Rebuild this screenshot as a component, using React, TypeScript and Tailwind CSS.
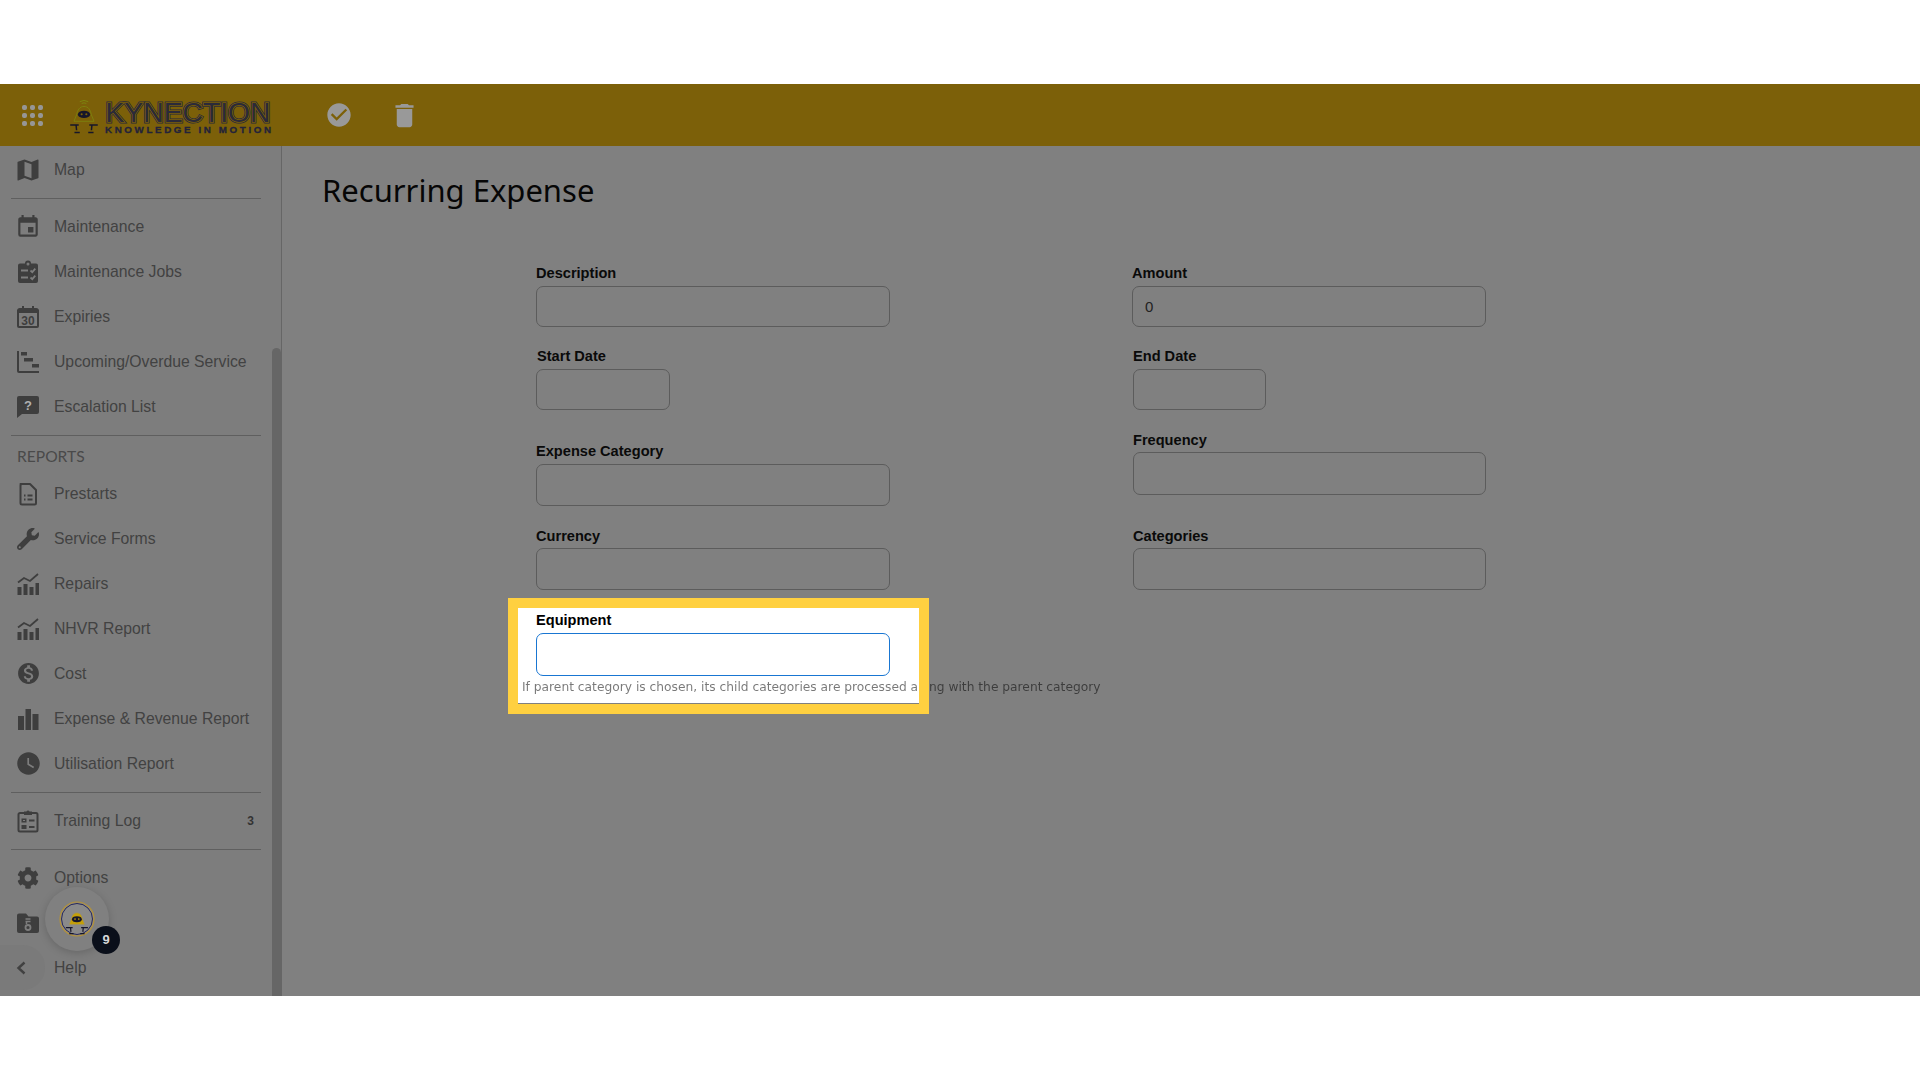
import * as React from 'react';
import { FaCog, FaWrench } from 'react-icons/fa';
import { MdCheckCircle, MdDelete, MdEvent, MdMap, MdMonetizationOn, MdWatchLater } from 'react-icons/md';

type IconType = React.ComponentType<{ size?: number; className?: string }>;

const PAPER = '#7d7d7d';

function JobsIcon({ size = 24 }: { size?: number }) {
  return (
    <svg width={size} height={size} viewBox="0 0 24 24">
      <path
        fill="currentColor"
        d="M4 3.5h5a3 3 0 0 1 6 0h5a2 2 0 0 1 2 2V21a2 2 0 0 1-2 2H4a2 2 0 0 1-2-2V5.500a2 2 0 0 1 2-2z"
      />
      <g stroke={PAPER} strokeWidth="1.8" fill="none">
        <path d="M5 10.500h7M5 17.500h7M14.500 10.500l1.800 1.700 3-3.500M14.500 17.500l1.800 1.700 3-3.500" />
        <circle cx="12" cy="4" r="0.6" />
      </g>
    </svg>
  );
}

function ExpiriesIcon({ size = 24 }: { size?: number }) {
  return (
    <svg width={size} height={size} viewBox="0 0 24 24">
      <path
        fill="currentColor"
        fillRule="evenodd"
        d="M6 1h2v2h8V1h2v2h2a3 3 0 0 1 3 2v16a2 2 0 0 1-2 2H3a2 2 0 0 1-2-2V5a3 3 0 0 1 3-2h2zM3 8v13h18V8z"
      />
      <text x="12" y="20" textAnchor="middle" fontSize="12" fontWeight="700" fontFamily="Liberation Sans" fill="currentColor">
        30
      </text>
    </svg>
  );
}

function GanttIcon({ size = 24 }: { size?: number }) {
  return (
    <svg width={size} height={size} viewBox="0 0 24 24" fill="currentColor">
      <path d="M1 1h2v19.500a.5.5 0 0 0 .5.5H23v2H3a2 2 0 0 1-2-2z" />
      <path d="M5 2h6v3.500H5zM8 8h9v3.500H8zM16 14h7v3.500h-7z" />
    </svg>
  );
}

function EscalationIcon({ size = 24 }: { size?: number }) {
  return (
    <svg width={size} height={size} viewBox="0 0 24 24">
      <path fill="currentColor" d="M3 1h18a2 2 0 0 1 2 2v14a2 2 0 0 1-2 2H6l-5 4V3a2 2 0 0 1 2-2z" />
      <text x="12" y="14.500" textAnchor="middle" fontSize="13" fontWeight="700" fontFamily="Liberation Sans" fill="#b0b0b0">
        ?
      </text>
    </svg>
  );
}

function DocIcon({ size = 24 }: { size?: number }) {
  return (
    <svg width={size} height={size} viewBox="0 0 24 24" fill="none" stroke="currentColor" strokeWidth="2">
      <path d="M4.500 2h9.500l6 6v13a1.500 1.500 0 0 1-1.500 1.500H6A1.500 1.500 0 0 1 4.500 21V3.500A1.500 1.500 0 0 1 6 2z" strokeLinejoin="round" />
      <path d="M8 13.500h1.500M11.500 13.500h5M8 17.500h1.500M11.500 17.500h5" />
    </svg>
  );
}

function BarsLineIcon({ size = 24 }: { size?: number }) {
  return (
    <svg width={size} height={size} viewBox="0 0 24 24">
      <path fill="currentColor" d="M1.500 15h4v8h-4zM7.500 12h4v11h-4zM13.500 15h4v8h-4zM19.500 11h3.500v12h-3.500z" />
      <path fill="none" stroke="currentColor" strokeWidth="1.800" d="M2 10.500l6-4.500 6 3 8-7" />
    </svg>
  );
}

function BarsIcon({ size = 24 }: { size?: number }) {
  return (
    <svg width={size} height={size} viewBox="0 0 24 24" fill="currentColor">
      <path d="M2 9h6v14H2zM9.500 2h5.500v21H9.500zM16.500 7h6v16h-6z" />
    </svg>
  );
}

function TrainingIcon({ size = 24 }: { size?: number }) {
  return (
    <svg width={size} height={size} viewBox="0 0 24 24">
      <path
        fill="none"
        stroke="currentColor"
        strokeWidth="2"
        d="M8 4H4a1.500 1.500 0 0 0-1.500 1.500V21A1.500 1.500 0 0 0 4 22.500h16a1.500 1.500 0 0 0 1.500-1.500V5.500A1.500 1.500 0 0 0 20 4h-4"
      />
      <path
        fill="currentColor"
        fillRule="evenodd"
        d="M8 2.500h2.500a1.600 1.600 0 0 1 3 0H16v3.500H8zM5.500 9.500h5v4h-5zM7 11v1h2v-1zM13 10.500h5.500v2H13zM5.500 16h5v4h-5zM13 17h5.500v2H13z"
      />
    </svg>
  );
}

function FolderIcon({ size = 24 }: { size?: number }) {
  return (
    <svg width={size} height={size} viewBox="0 0 24 24">
      <path fill="currentColor" d="M3 2.500h7l2.500 3H21a2 2 0 0 1 2 2V20a2 2 0 0 1-2 2H3a2 2 0 0 1-2-2V4.500a2 2 0 0 1 2-2z" />
      <path fill="none" stroke={PAPER} strokeWidth="1.500" d="M9.500 8h5M9.500 10.500h5M10.500 10.500V13" />
      <circle cx="12" cy="16.500" r="2.500" fill="none" stroke={PAPER} strokeWidth="1.800" />
    </svg>
  );
}

function AppsIcon() {
  return (
    <div className="grid w-[21px] grid-cols-3 gap-[3px]">
      {Array.from({ length: 9 }, (_, i) => (
        <span key={i} className="h-[5px] w-[5px] rounded-[2px] bg-[#969696]" />
      ))}
    </div>
  );
}

/** Little robot with the wifi arcs; used in the header and (smaller) in the round button. */
function Mascot({ body, outline }: { body: string; outline: string }) {
  return (
    <g>
      <path d="M10 3.500q4-2.500 8 0M11.800 5.200q2.200-1.300 4.400 0" stroke={outline} strokeWidth="0.800" fill="none" />
      <path d="M14 8c4 0 6 3 7 8l2.500 6h-19l2.500-6c1-5 3-8 7-8z" fill={body} stroke={outline} strokeWidth="0.700" />
      <ellipse cx="14" cy="15.500" rx="5.800" ry="3.500" fill="#16162a" />
      <circle cx="11.800" cy="15.300" r="1" fill={body} />
      <circle cx="16.200" cy="15.300" r="1" fill={body} />
      <path
        d="M1 25.500h5.500M9 25.500h-2.500l.5 5M5 32.500h5M27 25.500h-5.500M19 25.500h2.500l-.5 5M23 32.500h-5"
        stroke="#16162a"
        strokeWidth="1.400"
        fill="none"
      />
    </g>
  );
}

function Logo() {
  return (
    <div className="ml-[26px] flex items-center">
      <svg width="30" height="36" viewBox="0 0 28 34" className="mt-[2px]">
        <Mascot body="#7c6008" outline="#7d8a10" />
      </svg>
      <svg width="170" height="38" viewBox="0 0 170 38" className="ml-[4px] mt-[4px]">
        <defs>
          <text
            id="kynection-word"
            x="2.500"
            y="24"
            fontFamily="Liberation Sans"
            fontSize="27"
            textLength="165"
            lengthAdjust="spacingAndGlyphs"
          >
            KYNECTION
          </text>
        </defs>
        {/* layered strokes give the three-line lettering of the logo */}
        <use href="#kynection-word" fill="#2b2a38" stroke="#2b2a38" strokeWidth="3" />
        <use href="#kynection-word" fill="#7c6008" stroke="#7c6008" strokeWidth="1.500" />
        <use href="#kynection-word" fill="#2b2a38" />
        <text
          x="2"
          y="35"
          fontFamily="Liberation Sans"
          fontWeight="700"
          fontSize="9.800"
          textLength="166"
          fill="#23233a"
          stroke="#23233a"
          strokeWidth="0.300"
        >
          KNOWLEDGE IN MOTION
        </text>
      </svg>
    </div>
  );
}

function Header() {
  return (
    <header className="flex h-[62px] shrink-0 items-center bg-[#7c6009]">
      <div className="ml-[22px]">
        <AppsIcon />
      </div>
      <Logo />
      <div className="ml-[52px] text-[#999999]">
        <MdCheckCircle size={28} />
      </div>
      <div className="ml-[36px] text-[#999999]">
        <MdDelete size={31} />
      </div>
    </header>
  );
}

function NavRow({ icon: Icon, size, label, count }: { icon?: IconType; size?: number; label?: string; count?: string }) {
  return (
    <div className="flex h-[45px] items-center text-[15.75px] text-[#424242]">
      <span className="ml-[16px] flex w-[24px] shrink-0 items-center justify-center text-[#3e3e3e]">
        {Icon && <Icon size={size ?? 24} className="shrink-0" />}
      </span>
      <span className="ml-[14px] flex-1">{label}</span>
      {count && <span className="mr-[18px] text-[12px] font-bold text-[#333333]">{count}</span>}
    </div>
  );
}

function Divider() {
  return <div className="mx-[11px] mb-[5px] mt-[6px] h-px bg-[#5f5f5f]" />;
}

function Sidebar() {
  return (
    <aside className="relative flex w-[282px] shrink-0 border-r border-[#666666] bg-[#7d7d7d]">
      <nav className="w-[272px] overflow-hidden pt-px font-['Liberation_Sans',sans-serif]">
        <NavRow icon={MdMap} size={28} label="Map" />
        <Divider />
        <NavRow icon={MdEvent} size={26} label="Maintenance" />
        <NavRow icon={JobsIcon} label="Maintenance Jobs" />
        <NavRow icon={ExpiriesIcon} label="Expiries" />
        <NavRow icon={GanttIcon} label="Upcoming/Overdue Service" />
        <NavRow icon={EscalationIcon} label="Escalation List" />
        <Divider />
        <div className="flex h-[30px] items-center pl-[17px] pt-[2px] font-['Lato',sans-serif] text-[15.6px] text-[#4a4a4a]">
          REPORTS
        </div>
        <NavRow icon={DocIcon} label="Prestarts" />
        <NavRow icon={FaWrench} size={22} label="Service Forms" />
        <NavRow icon={BarsLineIcon} label="Repairs" />
        <NavRow icon={BarsLineIcon} label="NHVR Report" />
        <NavRow icon={MdMonetizationOn} size={25} label="Cost" />
        <NavRow icon={BarsIcon} label="Expense & Revenue Report" />
        <NavRow icon={MdWatchLater} size={27} label="Utilisation Report" />
        <Divider />
        <NavRow icon={TrainingIcon} label="Training Log" count="3" />
        <Divider />
        <NavRow icon={FaCog} size={22} label="Options" />
        <NavRow icon={FolderIcon} />
        <NavRow label="Help" />
      </nav>
      <div className="flex flex-1 flex-col justify-end">
        <div className="h-[648px] rounded-t-[6px] bg-[#666666]" />
      </div>

      {/* collapse tab and chat button float over the nav */}
      <div className="absolute bottom-[6px] left-0 flex h-[45px] w-[45px] items-center rounded-r-[22px] bg-[#7a7a7a] pl-[16px] text-[#414141]">
        <svg width="10" height="14" viewBox="0 0 10 14" fill="none" stroke="currentColor" strokeWidth="2.400">
          <path d="M8.500 1.500L2.500 7l6 5.500" />
        </svg>
      </div>
      <div className="absolute left-[45px] top-[741px] flex h-[64px] w-[64px] items-center justify-center rounded-full bg-[#808080] shadow-[0_2px_8px_rgba(0,0,0,0.18)]">
        <svg width="36" height="36" viewBox="0 0 36 36">
          <circle cx="18" cy="18" r="17" fill="#8a8a8a" stroke="#b3923a" strokeWidth="1.200" />
          <circle cx="18" cy="18" r="15.500" fill="none" stroke="#27285a" strokeWidth="1" />
          <g transform="translate(6 5) scale(0.85)">
            <Mascot body="#c49f08" outline="#8a8a8a" />
          </g>
        </svg>
        <span className="absolute left-[47px] top-[39px] flex h-[28px] w-[28px] items-center justify-center rounded-full bg-[#0a0f1a] font-['Liberation_Sans',sans-serif] text-[13px] font-bold text-[#d8d8d8]">
          9
        </span>
      </div>
    </aside>
  );
}

function Field({
  label,
  value,
  width = 'w-full',
  height,
  labelClass = '',
  className = '',
}: {
  label: string;
  value?: string;
  width?: string;
  height: string;
  labelClass?: string;
  className?: string;
}) {
  return (
    <div className={className}>
      <div className={`mb-[4px] h-[18px] text-[14.6px] font-bold leading-[18px] text-[#0a0a0a] ${labelClass}`}>{label}</div>
      <input
        readOnly
        value={value ?? ''}
        className={`block rounded-[7px] border border-[#5c5c5c] bg-transparent px-[12px] text-[15px] text-[#222222] outline-none ${width} ${height}`}
      />
    </div>
  );
}

/** Spotlit field: white backing and yellow frame, the hint runs out past the frame. */
function EquipmentField() {
  return (
    <div className="relative mt-[21px]">
      <div className="absolute -bottom-[9px] -left-[18px] -right-[29px] -top-[3px] bg-white" />
      <div className="relative z-[1]">
        <div className="mb-[4px] h-[18px] text-[14.6px] font-bold leading-[18px] text-black">Equipment</div>
        <input
          readOnly
          className="block h-[43px] w-full rounded-[7px] border border-[#1976d2] bg-white outline-none"
        />
        <p className="-ml-[14px] mt-[3px] h-[15px] w-[600px] whitespace-nowrap bg-[linear-gradient(90deg,#787878_397px,#3c3c3c_397px)] bg-clip-text font-['DejaVu_Sans',sans-serif] text-[12.25px] leading-[16px] text-transparent">
          If parent category is chosen, its child categories are processed along with the parent category
        </p>
      </div>
      <div className="pointer-events-none absolute -bottom-[20px] -left-[28px] -right-[39px] -top-[13px] z-[2] border-[10px] border-[#ffd040]" />
    </div>
  );
}

function Main() {
  return (
    <main className="flex-1 bg-[#808080] pl-[40px] pt-[24px] font-['Liberation_Sans',sans-serif]">
      <h1 className="h-[40px] font-['Noto_Sans',sans-serif] text-[31px] leading-[40px] text-[#060606]">
        Recurring Expense
      </h1>
      <div className="mt-[54px] flex pl-[214px]">
        <div className="w-[354px]">
          <Field label="Description" height="h-[41px]" />
          <Field label="Start Date" width="w-[134px]" height="h-[41px]" labelClass="pl-[1px]" className="mt-[20px]" />
          <Field label="Expense Category" height="h-[42px]" className="mt-[32px]" />
          <Field label="Currency" height="h-[42px]" labelClass="translate-y-px" className="mt-[20px]" />
          <EquipmentField />
        </div>
        <div className="ml-[242px] w-[354px]">
          <Field label="Amount" value="0" height="h-[41px]" />
          <Field label="End Date" width="ml-[1px] w-[133px]" height="h-[41px]" labelClass="pl-[1px]" className="mt-[20px]" />
          <Field
            label="Frequency"
            width="ml-[1px] w-[353px]"
            height="h-[43px]"
            labelClass="translate-y-px pl-[1px]"
            className="mt-[20px]"
          />
          <Field
            label="Categories"
            width="ml-[1px] w-[353px]"
            height="h-[42px]"
            labelClass="translate-y-px pl-[1px]"
            className="mt-[31px]"
          />
        </div>
      </div>
    </main>
  );
}

export default function App() {
  return (
    <div className="h-[1080px] bg-white py-[84px]">
      <div className="flex h-[912px] flex-col overflow-hidden">
        <Header />
        <div className="flex min-h-0 flex-1">
          <Sidebar />
          <Main />
        </div>
      </div>
    </div>
  );
}
